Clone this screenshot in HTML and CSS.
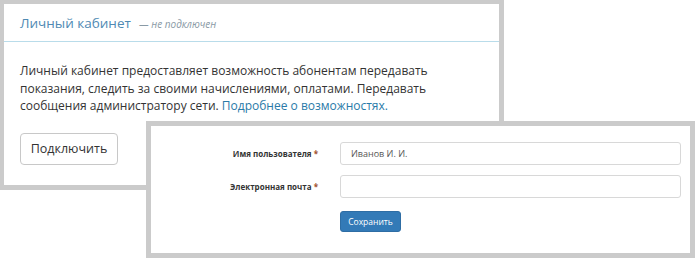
FILE: index.html
```html
<!DOCTYPE html>
<html lang="ru">
<head>
    <meta charset="UTF-8">
    <title>Личный кабинет</title>
    <link rel="stylesheet" href="styles.css">
</head>
<body>
    <div class="canvas">
        <div class="panel cabinet">
            <div class="panel-heading">
                <span class="panel-title">Личный кабинет</span>
                <span class="status">— не подключен</span>
            </div>
            <div class="panel-body">
                <p>Личный кабинет предоставляет возможность абонентам передавать показания, следить за своими начислениями, оплатами. Передавать сообщения администратору сети. <a href="#">Подробнее о возможностях.</a></p>
                <button class="btn-default">Подключить</button>
            </div>
        </div>

        <div class="panel settings">
            <form class="form">
                <label>Имя пользователя <span class="req">*</span></label>
                <input type="text" value="Иванов И. И.">
                <label>Электронная почта <span class="req">*</span></label>
                <input type="text">
                <span></span>
                <div><button type="button" class="btn-primary">Сохранить</button></div>
            </form>
        </div>
    </div>
</body>
</html>
```

FILE: styles.css
```css
body {
    margin: 0;
    background: #fff;
    font-family: "Open Sans", Arial, sans-serif;
    color: #333;
}

.canvas {
    position: relative;
    width: 695px;
    height: 258px;
    overflow: hidden;
}

.panel {
    box-sizing: border-box;
    background: #fff;
    border: 5px solid #cbcbcb;
}

.cabinet {
    width: 504px;
    height: 190px;
    border-width: 4px 5px 5px 4px;
}

.panel-heading {
    height: 38px;
    box-sizing: border-box;
    padding: 7px 16px 0;
    border-bottom: 1px solid #b9dcea;
}

.panel-title {
    font-size: 13.5px;
    color: #4f8ab3;
}

.status {
    margin-left: 4px;
    font-size: 10px;
    font-style: italic;
    color: #8a9aa5;
}

.panel-body {
    padding: 20px 16px 0;
}

.panel-body p {
    margin: 0 0 18px;
    font-size: 12px;
    line-height: 17.5px;
}

.panel-body a {
    color: #2a7aa8;
    text-decoration: none;
}

.btn-default {
    width: 98px;
    height: 32px;
    background: #fff;
    border: 1px solid #c8c8c8;
    border-radius: 4px;
    font-family: inherit;
    font-size: 12.5px;
    color: #333;
}

.settings {
    position: absolute;
    left: 146px;
    top: 121px;
    width: 549px;
    height: 137px;
}

.form {
    display: grid;
    grid-template-columns: 167px 341px;
    column-gap: 22px;
    row-gap: 10px;
    align-items: center;
    padding-top: 16px;
}

.form label {
    text-align: right;
    font-size: 8px;
    font-weight: 700;
    color: #333;
}

.req {
    color: #a0522d;
}

.form input {
    box-sizing: border-box;
    height: 23px;
    padding: 0 10px;
    border: 1px solid #d8d8d8;
    border-radius: 3px;
    font-family: inherit;
    font-size: 9px;
    color: #555;
}

.btn-primary {
    height: 21px;
    width: 61px;
    padding: 0;
    background: #337ab7;
    border: 1px solid #2e6da4;
    border-radius: 3px;
    font-family: inherit;
    font-size: 8.5px;
    color: #fff;
}
```
